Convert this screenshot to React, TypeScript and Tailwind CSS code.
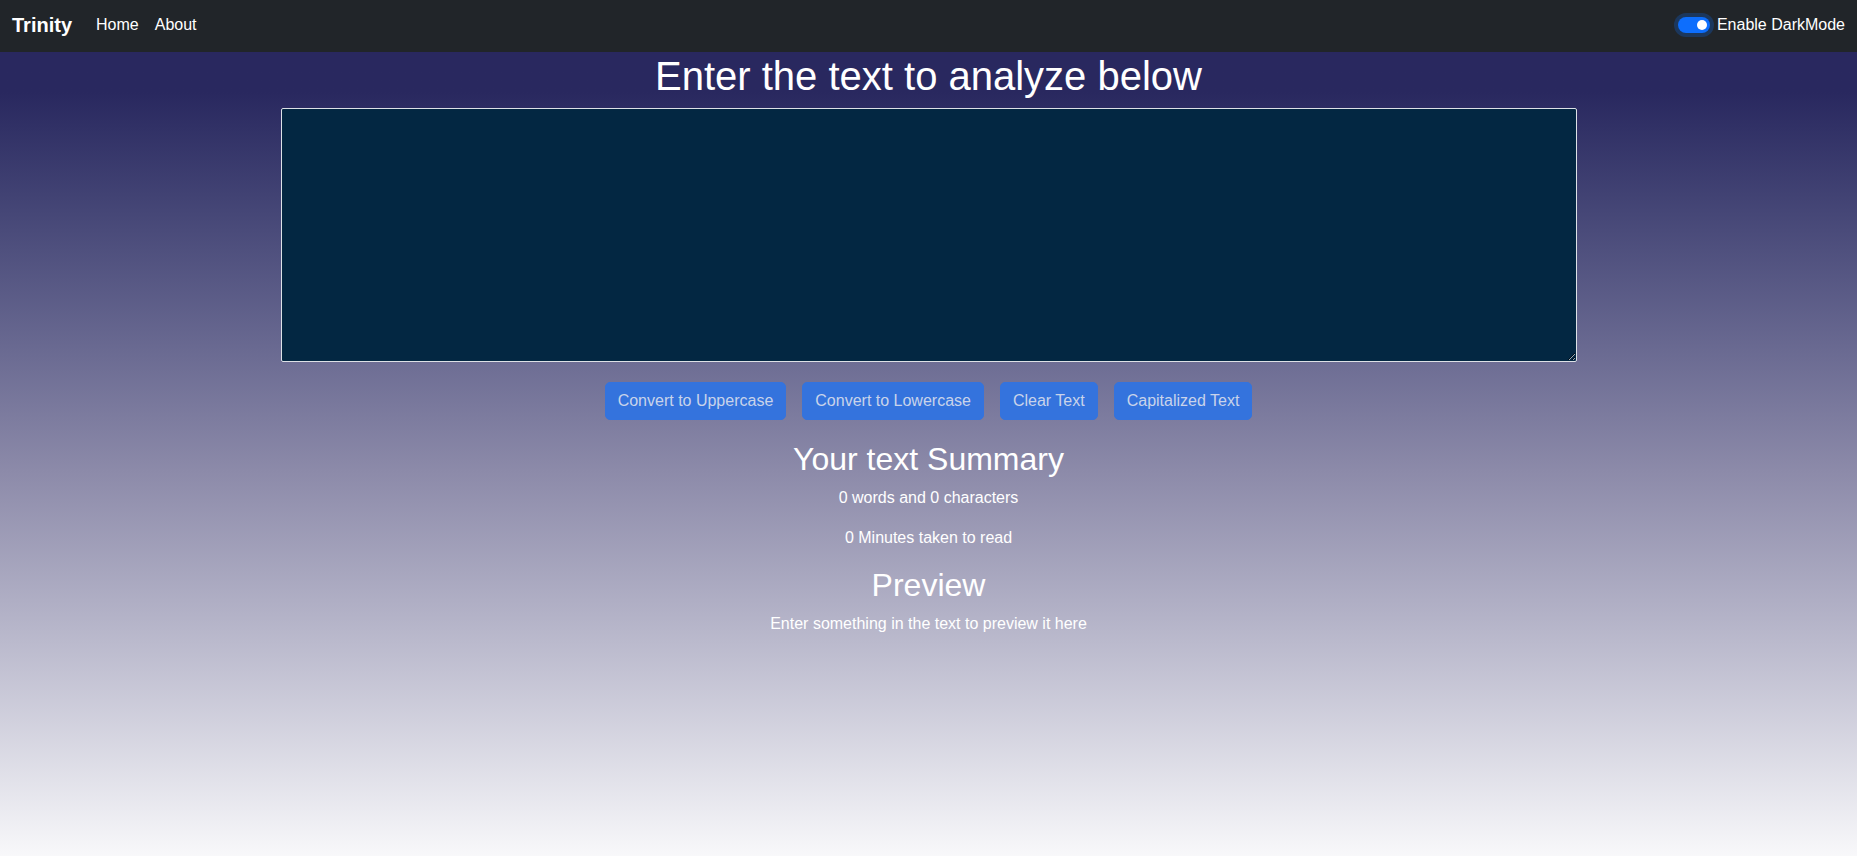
import React, { useState } from 'react';

const font = { fontFamily: '"Liberation Sans", Arial, sans-serif' };

const Navbar = () => (
  <nav className="flex h-[52px] items-center justify-between bg-[#212529] px-3 pb-[2px] text-white">
    <div className="flex items-center">
      <a href="#" className="mr-4 text-[20px] font-bold leading-[30px] text-white">Trinity</a>
      <ul className="flex items-center">
        <li><a href="#" className="px-2 text-base text-white">Home</a></li>
        <li><a href="#" className="px-2 text-base text-white">About</a></li>
      </ul>
    </div>
    <div className="flex items-center">
      <span className="relative mr-[7px] inline-block h-4 w-8 rounded-full bg-[#0d6efd] ring-4 ring-[#0d6efd]/25">
        <span className="absolute right-[3px] top-[3px] h-[10px] w-[10px] rounded-full bg-white" />
      </span>
      <label className="text-base text-white">Enable DarkMode</label>
    </div>
  </nav>
);

export default function App() {
  const [text, setText] = useState('');
  const words = text.split(/\s+/).filter(w => w.length > 0).length;
  const btn = 'mx-2 my-1 rounded-[5px] border border-[#3473dd] bg-[#3473dd] px-3 py-1.5 text-base leading-6 text-[#c9d3ea]';

  return (
    <div className="flex min-h-screen flex-col" style={font}>
      <Navbar />
      <main className="flex-1 bg-linear-to-b from-[#29285f] from-5% via-[#8c8aa9] via-52% to-[#f8f8fa] pb-10 text-white">
        <div className="mx-auto w-[1320px] px-3">
          <h1 className="mb-2 text-center text-[40px] leading-[48px]">Enter the text to analyze below</h1>
          <div className="mb-4">
            <textarea
              rows={10}
              value={text}
              onChange={e => setText(e.target.value)}
              className="block h-[254px] w-full resize-y rounded-[2px] border border-[#dde1e6] bg-[#032742] px-3 py-1.5 text-white outline-none"
            />
          </div>
          <div className="flex justify-center">
            <button className={btn}>Convert to Uppercase</button>
            <button className={btn}>Convert to Lowercase</button>
            <button className={btn}>Clear Text</button>
            <button className={btn}>Capitalized Text</button>
          </div>
        </div>
        <div className="mx-auto my-4 w-[1320px] px-3 text-center">
          <h2 className="mb-2 text-[32px] leading-[38px]">Your text Summary</h2>
          <p className="mb-4 text-base leading-6">{words} words and {text.length} characters</p>
          <p className="mb-4 text-base leading-6">{0.008 * words} Minutes taken to read</p>
          <h2 className="mb-2 text-[32px] leading-[38px]">Preview</h2>
          <p className="text-base leading-6">{text.length > 0 ? text : 'Enter something in the text to preview it here'}</p>
        </div>
      </main>
    </div>
  );
}
